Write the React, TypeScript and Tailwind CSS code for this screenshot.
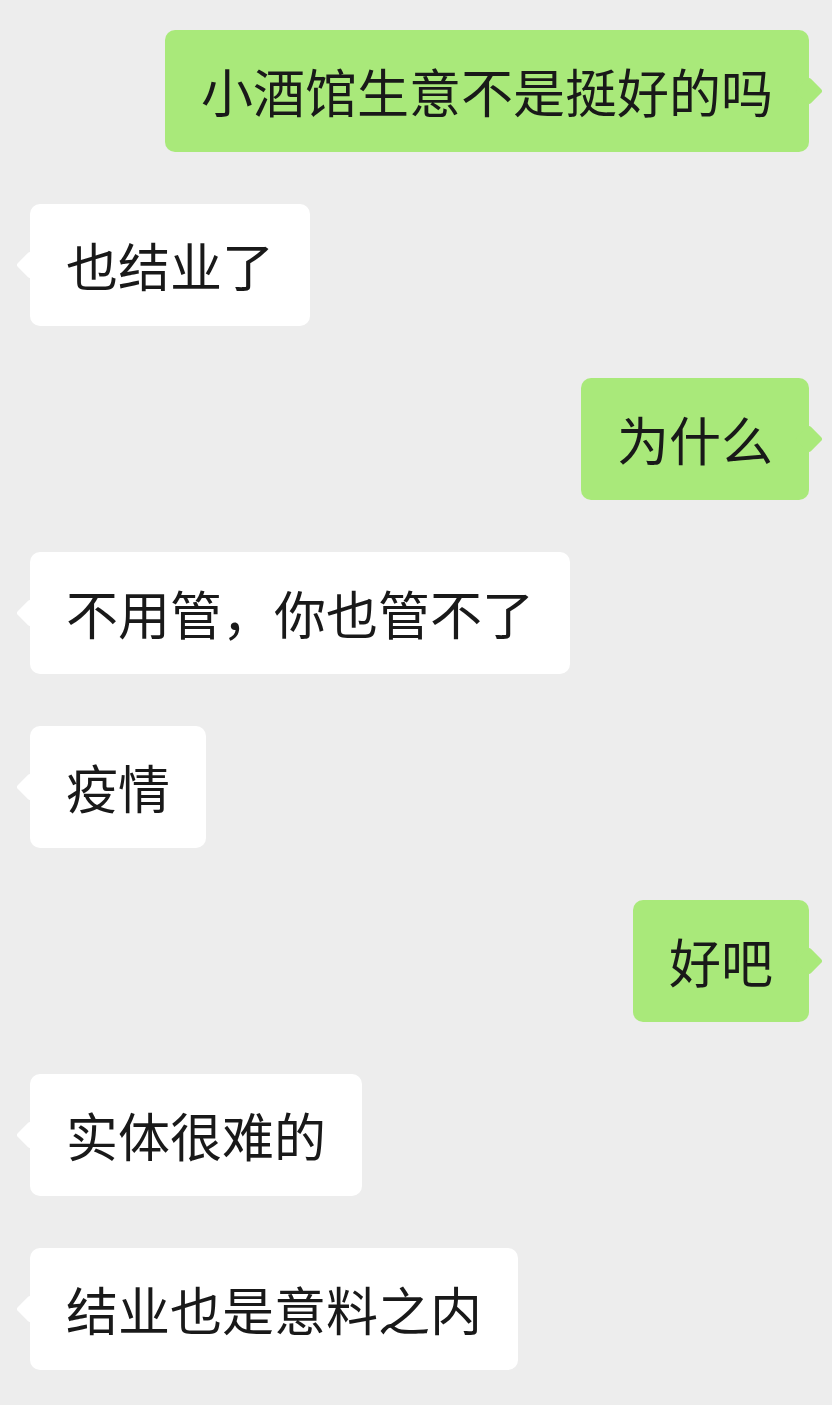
const messages: { text: string; mine: boolean }[] = [
  { text: "小酒馆生意不是挺好的吗", mine: true },
  { text: "也结业了", mine: false },
  { text: "为什么", mine: true },
  { text: "不用管，你也管不了", mine: false },
  { text: "疫情", mine: false },
  { text: "好吧", mine: true },
  { text: "实体很难的", mine: false },
  { text: "结业也是意料之内", mine: false },
];

function Bubble({ text, mine }: { text: string; mine: boolean }) {
  return (
    <div className={mine ? "self-end mr-[23px]" : "self-start ml-[30px]"}>
      <div
        className={
          mine
            ? "relative h-[122px] flex items-center px-[36px] rounded-[10px] bg-[#a9e97a]"
            : "relative h-[122px] flex items-center px-[36px] rounded-[10px] bg-white"
        }
      >
        {/* tail */}
        <span
          className={
            mine
              ? "absolute top-1/2 right-0 w-[20px] h-[20px] -translate-y-1/2 translate-x-1/2 rotate-45 rounded-[3px] bg-[#a9e97a]"
              : "absolute top-1/2 left-0 w-[20px] h-[20px] -translate-y-1/2 -translate-x-1/2 rotate-45 rounded-[3px] bg-white"
          }
        />
        <span className="relative text-[52px] leading-[62px] text-[#191919] whitespace-nowrap">
          {text}
        </span>
      </div>
    </div>
  );
}

export default function App() {
  return (
    <div
      className="w-[832px] min-h-[1405px] bg-[#ededed] flex flex-col gap-[52px] pt-[30px]"
      style={{ fontFamily: '"Noto Sans CJK SC", "Noto Sans", sans-serif' }}
    >
      {messages.map((m, i) => (
        <Bubble key={i} text={m.text} mine={m.mine} />
      ))}
    </div>
  );
}
